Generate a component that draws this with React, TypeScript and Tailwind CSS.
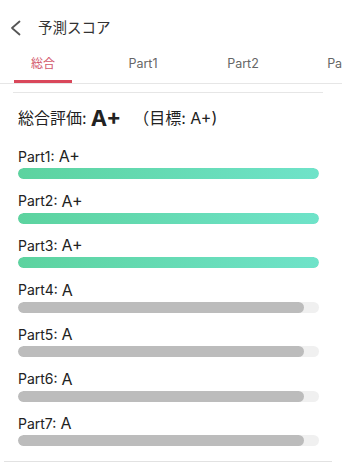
import React from 'react';

const font = { fontFamily: '"Inter", "Noto Sans CJK JP", sans-serif' };

const tabs = ['総合', 'Part1', 'Part2', 'Part3'];

const parts = [
  { name: 'Part1', grade: 'A+', value: 100, good: true },
  { name: 'Part2', grade: 'A+', value: 100, good: true },
  { name: 'Part3', grade: 'A+', value: 100, good: true },
  { name: 'Part4', grade: 'A', value: 95, good: false },
  { name: 'Part5', grade: 'A', value: 95, good: false },
  { name: 'Part6', grade: 'A', value: 95, good: false },
  { name: 'Part7', grade: 'A', value: 95, good: false },
];

const ScoreBar = ({ value, good }: { value: number; good: boolean }) => (
  <div className="h-[11px] w-[301px] rounded-full bg-[#f0f0f0] overflow-hidden">
    <div
      className={
        good
          ? 'h-full rounded-full bg-gradient-to-r from-[#5cd39f] to-[#6fe3c9]'
          : 'h-full rounded-full bg-[#bcbcbc]'
      }
      style={{ width: `${value}%` }}
    />
  </div>
);

export default function App() {
  return (
    <div className="w-[350px] h-[475px] bg-white overflow-hidden text-[#222]" style={font}>
      {/* header */}
      <div className="h-[56px] flex items-center">
        <svg className="ml-[9px]" width="13" height="16" viewBox="0 0 13 16" fill="none">
          <polyline points="10.5,1.5 3,8 10.5,14.5" stroke="#555" strokeWidth="1.8" strokeLinecap="round" strokeLinejoin="round" />
        </svg>
        <span className="ml-[16px] text-[14.5px] text-[#333]">予測スコア</span>
      </div>

      {/* tabs */}
      <div className="h-[28px] w-[342px] border-b border-[#e6e6e6] overflow-hidden">
        <div className="flex -ml-[7px]">
          {tabs.map((t, i) => (
            <div key={t} className="w-[100px] h-[27px] shrink-0 flex flex-col items-center justify-between">
              <span className={i === 0 ? 'text-[12px] leading-[16px] text-[#d2566a]' : 'text-[12.5px] leading-[16px] text-[#666]'}>
                {t}
              </span>
              {i === 0 ? <div className="h-[3px] w-[58px] bg-[#d9475a]" /> : <div className="h-[3px]" />}
            </div>
          ))}
        </div>
      </div>

      <div className="mt-[8px] ml-[13px] w-[310px] h-px bg-[#e6e6e6]" />

      {/* content */}
      <div className="px-[18px]">
        <div className="mt-[11px] h-[28px] flex items-center text-[16px]">
          <span>総合評価:</span>
          <span className="ml-[4px] text-[22px] font-bold">A+</span>
          <span className="ml-[12px]">（目標: A+)</span>
        </div>

        <div className="mt-[14px]">
          {parts.map(p => (
            <div key={p.name} className="h-[44.5px]">
              <div className="h-[20px] flex items-center">
                <span className="text-[14px]">{p.name}:</span>
                <span className="ml-[4px] text-[16px]">{p.grade}</span>
              </div>
              <div className="mt-[2px]">
                <ScoreBar value={p.value} good={p.good} />
              </div>
            </div>
          ))}
        </div>
      </div>

      <div className="mt-[3px] ml-[4px] w-[328px] h-px bg-[#e2e2e2]" />
    </div>
  );
}
